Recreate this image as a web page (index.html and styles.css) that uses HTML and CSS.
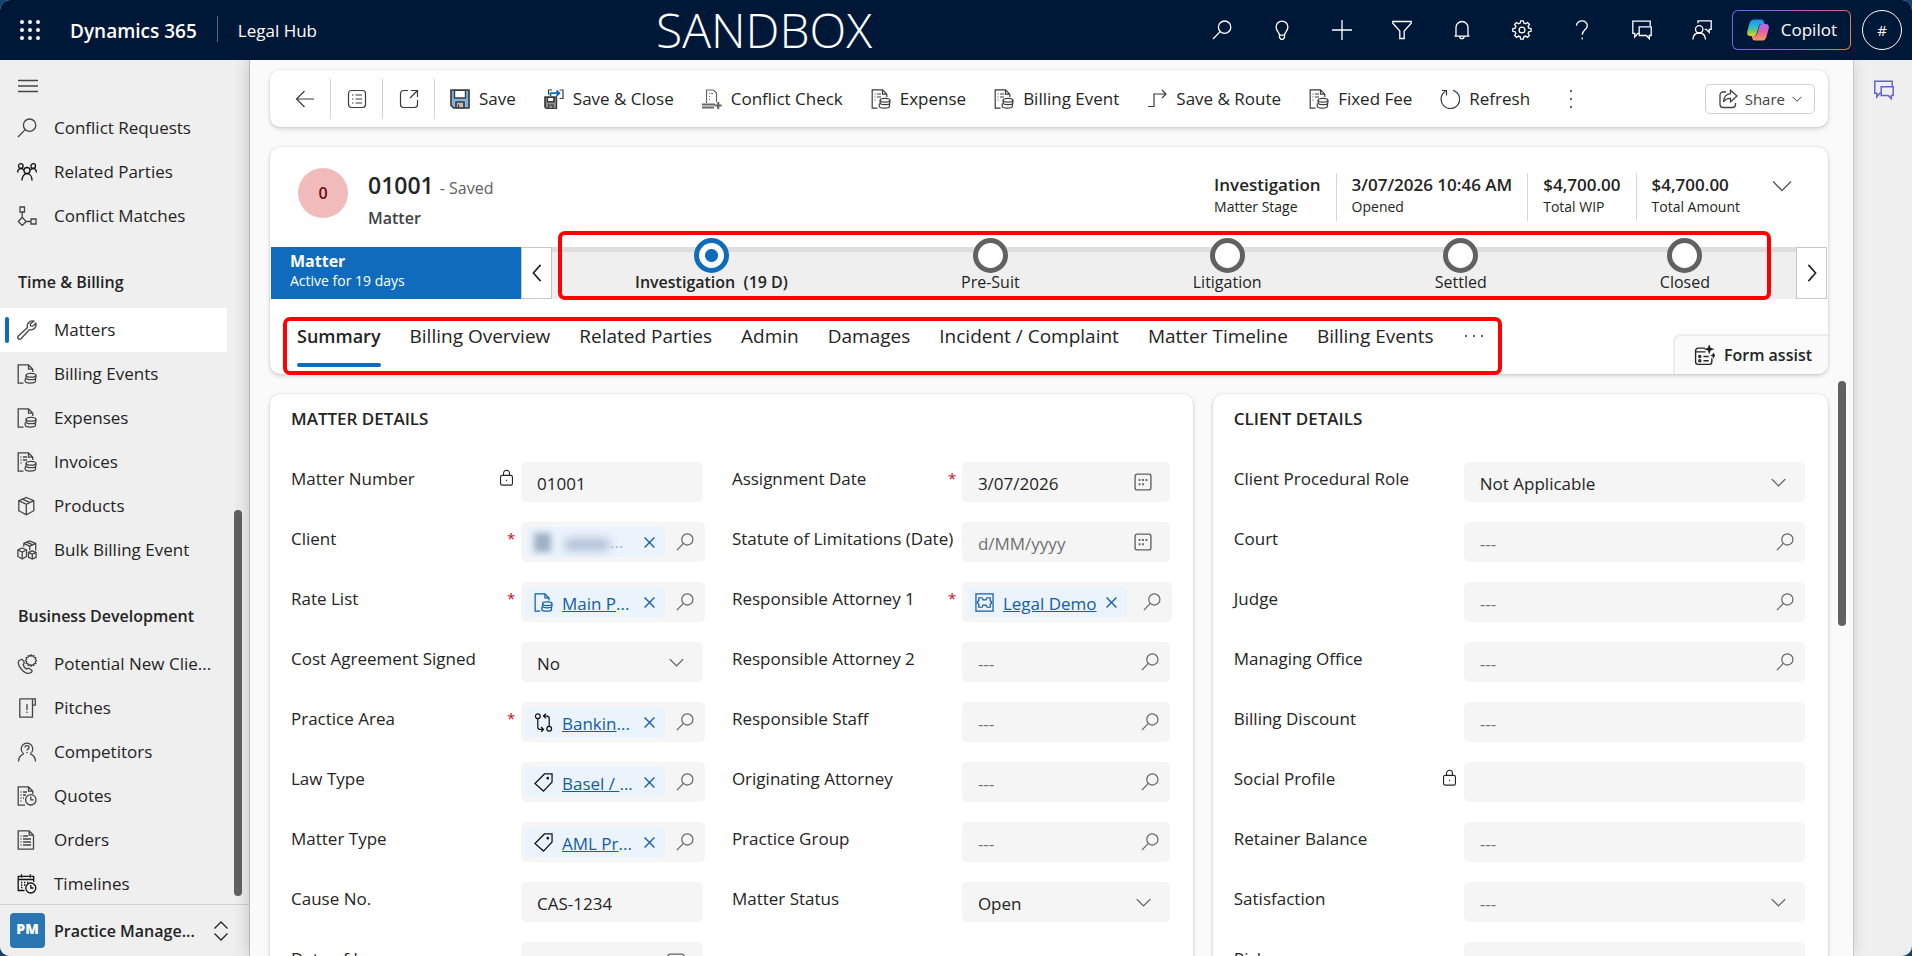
FILE: index.html
```html
<!DOCTYPE html>
<html lang="en">
<head>
<meta charset="utf-8">
<title>Matter: 01001 - Dynamics 365 Legal Hub</title>
<link rel="stylesheet" href="styles.css">
</head>
<body>
<svg class="sprite" aria-hidden="true">
  <defs>
    <linearGradient id="cp-a" x1="0" y1="0" x2="0" y2="1"><stop offset="0" stop-color="#1b8ff0"/><stop offset=".4" stop-color="#2bb5d8"/><stop offset=".7" stop-color="#6cc96a"/><stop offset="1" stop-color="#f2d21f"/></linearGradient>
    <linearGradient id="cp-b" x1="0" y1="1" x2="0" y2="0"><stop offset="0" stop-color="#a56cf5"/><stop offset=".45" stop-color="#e45fae"/><stop offset="1" stop-color="#ff9a4a"/></linearGradient>
  </defs>
  <symbol id="i-search" viewBox="0 0 20 20"><circle cx="12.6" cy="7.2" r="6.2"/><path d="M8.2 11.6 1 19"/></symbol>
  <symbol id="i-bulb" viewBox="0 0 20 20"><path d="M7.5 15.2c0-3-3.4-4-3.4-8.2a5.9 5.9 0 0 1 11.8 0c0 4.200-3.400 5.200-3.400 8.200zM7.500 15.200v2.300l1.500 1.800h2l1.500-1.800v-2.300"/></symbol>
  <symbol id="i-plus" viewBox="0 0 20 20"><path d="M10 0v20M0 10h20"/></symbol>
  <symbol id="i-filter" viewBox="0 0 20 20"><path d="M.8 1.500h18.400v1.700L12.200 11v7.500H7.800V11L.8 3.200z"/></symbol>
  <symbol id="i-bell" viewBox="0 0 20 20"><path d="M2.500 16.200h15M4 16V7.500a6 6 0 0 1 12 0V16M7.800 16.500a2.200 2.200 0 0 0 4.400 0"/></symbol>
  <symbol id="i-gear" viewBox="0 0 20 20"><circle cx="10" cy="10" r="2.900"/><path d="M8.700.8h2.600l.5 2.300 1.700.7 2-1.300 1.900 1.900-1.300 2 .7 1.700 2.300.6v2.600l-2.300.5-.7 1.700 1.300 2-1.900 1.900-2-1.300-1.700.7-.5 2.300H8.700l-.5-2.300-1.700-.7-2 1.300-1.900-1.900 1.300-2-.7-1.700-2.400-.5V8.700l2.400-.6.7-1.700-1.300-2 1.900-1.900 2 1.300 1.700-.7z"/></symbol>
  <symbol id="i-help" viewBox="0 0 20 20"><path d="M4.500 5.800C4.500 2.800 7 .9 10 .9s5.300 1.900 5.300 4.800c0 4-5.100 4.300-5.100 9"/><path d="M10.200 17.600v1.800"/></symbol>
  <symbol id="i-chat" viewBox="0 0 20 20"><path d="M7.200 13.300H5.800L2.800 17v-3.700H.8V1.200h17.400V6"/><path d="M7.200 6.800h12v8.700h-1.900v3.200l-3.100-3.200h-7z"/></symbol>
  <symbol id="i-feedback" viewBox="0 0 20 20"><circle cx="7.200" cy="9.300" r="3.700"/><path d="M.9 19.500c.2-4 2.700-6.500 6.300-6.500s6.100 2.500 6.300 6.500M6 3.300V.9h13.200v8.500h-2v3l-3-3h-1.500"/></symbol>
  <symbol id="i-menu" viewBox="0 0 20 20"><path d="M0 4.500h20M0 10h20M0 15.500h20"/></symbol>
  <symbol id="i-people" viewBox="0 0 20 20"><circle cx="3.800" cy="4" r="2.300"/><circle cx="16.200" cy="4" r="2.300"/><circle cx="10" cy="8.500" r="3"/><path d="M.6 10.500c0-2.500 1.200-4 3.200-4 1.400 0 2.400.7 2.900 1.600M19.400 10.500c0-2.500-1.200-4-3.200-4-1.400 0-2.400.7-2.900 1.600M5 18.500c0-4 2-6.800 5-6.800s5 2.800 5 6.800"/></symbol>
  <symbol id="i-nodes" viewBox="0 0 20 20"><path d="M3 1h4.500v5H3zM14 13h5v5h-5zM5.200 6v5.300M5.200 11.300 1.300 15.500l3.900 4 3.900-4zM9.100 15.500H14"/></symbol>
  <symbol id="i-wrench" viewBox="0 0 20 20"><path d="M16.800 1.200a5 5 0 0 0-6.300 6.400L1.300 16a1.900 1.900 0 0 0 2.700 2.700l8.500-9.200a5 5 0 0 0 6.300-6.300l-3 3-2.200-.2-.4-2.100z"/></symbol>
  <symbol id="i-coins" viewBox="0 0 20 20"><path d="M6.500 19.200H1.200V.8h10.300l4.300 4.400V8M11.500.8v4.400h4.300"/><ellipse cx="14" cy="11.300" rx="4.900" ry="1.900"/><path d="M9.100 11.300v2.500c0 1 2.200 1.900 4.900 1.900s4.900-.9 4.900-1.900v-2.500M8.200 14.500v2.600c0 1.200 2.200 2.100 5.100 2.100s5.200-.9 5.200-2.100v-2.600"/></symbol>
  <symbol id="i-invoice" viewBox="0 0 20 20"><use href="#i-coins"/><path d="M3.500 5h1M6 5h4M3.500 8h1M6 8h4M3.500 11h1"/></symbol>
  <symbol id="i-box" viewBox="0 0 20 20"><path d="m9.300 1.500 7.500 3.200v10l-7.500 4-7.500-4v-10zM1.800 4.700l7.500 3.600 7.500-3.600M9.300 8.300v10.400M5.500 3.100 13 6.700"/></symbol>
  <symbol id="i-boxes" viewBox="0 0 20 20"><path d="m5.200 8 4.300 2v6.500l-4.300 2.500L.9 16.500V10zM.9 10l4.300 2 4.300-2M5.200 12v7M12.500.8l6.200 2.600v7M6.800 6.800V3.400L12.500.8M6.800 3.400l5.900 2.800 6-2.800M12.700 6.200v4M9.700 2.100l6 2.800M15.300 10.800l3.800 1.700v4.900L15.300 19l-3.800-1.600v-4.900zM11.500 12.500l3.800 1.700 3.800-1.700M15.300 14.200V19"/></symbol>
  <symbol id="i-phone" viewBox="0 0 20 20"><path d="M3.800 5.500c-3 1-3.300 4-1 7.700 2.500 4 6.500 6.500 9.500 6 2.500-.5 3.300-2 2.300-3l-2.300-1.700c-1-.7-1.700 0-2.700.6-2-1-3-2.500-3.500-4.600.9-.8 1.300-1.400.9-2.500l-1.100-1.700c-.4-.9-1.200-1.100-2.100-.8z"/><path d="m14 .8 1 1.400 1.700-.6.3 1.700 1.800.3-.5 1.700 1.300 1.200-1.300 1.200.5 1.700-1.800.3-.3 1.700-1.700-.6-1 1.400-1-1.400-1.700.6-.3-1.700L9.200 9.400l.5-1.700-1.300-1.200 1.300-1.200-.5-1.700 1.800-.3.3-1.700 1.700.6z"/></symbol>
  <symbol id="i-pitch" viewBox="0 0 20 20"><path d="M2.800.8h15.500v6.400h-2.800V.8M15.500 7.200v12H2.800V.8M10 6v6M10 13.500v1.500"/></symbol>
  <symbol id="i-competitor" viewBox="0 0 20 20"><path d="M6.800 11.800a5.800 5.800 0 1 1 6.400 0M1.500 19.500c.2-4.200 2.200-6.700 5.300-7.700M18.500 19.500c-.2-4.200-2.200-6.700-5.300-7.700M8 5.500c0-2.400 4-2.400 4 0 0 1.700-2 1.500-2 3M10 10v1.200"/></symbol>
  <symbol id="i-quote" viewBox="0 0 20 20"><path d="M8 19.200H1.200V.8h10.300l4.300 4.400V8M11.500.8v4.400h4.300M3.500 6h1M6 6h4M3.500 9h1M6 9h3M3.500 12h1M6 12h1M3.500 15h1"/><circle cx="13.800" cy="13.800" r="5.200"/><path d="M13.800 10.500v3.300h3"/></symbol>
  <symbol id="i-order" viewBox="0 0 20 20"><path d="M1.200.8h11l4.300 4.400v14H1.200zM12.200.8v4.400h4.300M3.500 6h1M6 6h5M3.500 9h1M6 9h8M3.500 12h1M6 12h8M3.500 15h1M6 15h8"/></symbol>
  <symbol id="i-timeline" viewBox="0 0 20 20"><path d="M7.500 16.500H1.200V2.300h15.500V8M1.200 5.500h15.500M4.500.3v3.500M13.300.3v3.500M4 8.500h1.300M7 8.500h1.300M10 8.500h1.300M4 11h1.300M7 11h1.300M4 13.500h1.300"/><circle cx="13.800" cy="14" r="5"/><path d="M13.800 11v3h2.700"/></symbol>
  <symbol id="i-updown" viewBox="0 0 20 20"><path d="M3.500 7.500 10 1l6.500 6.500M3.500 12.500 10 19l6.500-6.500"/></symbol>
  <symbol id="i-back" viewBox="0 0 20 20"><path d="M19 10H1.500M9.500 2 1.500 10l8 8"/></symbol>
  <symbol id="i-form" viewBox="0 0 20 20"><rect x="1.500" y="1.500" width="17" height="17" rx="3"/><path d="M5 6h1.500M8.500 6H15M5 10h1.500M8.500 10H15M5 14h1.500M8.500 14H15"/></symbol>
  <symbol id="i-popout" viewBox="0 0 20 20"><path d="M9 1.500H4.500a3 3 0 0 0-3 3v11a3 3 0 0 0 3 3h11a3 3 0 0 0 3-3V11M12 1.500h6.500V8M18.500 1.500 11 9"/></symbol>
  <symbol id="i-save" viewBox="0 0 20 20"><path fill="#7fb3e0" d="M1 1h18v18H3.500L1 16.500z"/><path fill="#fff" d="M4.500 1.500h11V9h-11z"/><path fill="#c9b9ae" d="M6 13h8v6H6z"/><path d="M1 1h18v18H3.500L1 16.500zM4.500 1v8h11V1M6 19v-6h8v6M8.500 15.500V19"/></symbol>
  <symbol id="i-saveclose" viewBox="0 0 20 20"><path fill="#8f8f8f" d="M1 8h11.500v11.500H2.500L1 18z"/><path fill="#fff" d="M3.500 8.500h6.500v4H3.500z"/><path d="M1 8h11.500v11.500H2.500L1 18zM3.500 8v5H10V8M4.500 19.500V16h4.500v3.500M4.500 5.500V1H8M15.500 1H19v8.500h-3.500"/><path class="blue" d="M6.500 7V4.200h8.500M12.500 1.500l2.800 2.700-2.800 2.700"/></symbol>
  <symbol id="i-stamp" viewBox="0 0 20 20"><path d="M4.500 14V1h7l3 3v9M7 4.500h1M9 4.500h2M7 7.500h1M7 10.500h1"/><path stroke-width="2.200" d="M0 15.500h13M0 18.500h12M16.200 13v7M12.700 16.500h7"/></symbol>
  <symbol id="i-route" viewBox="0 0 20 20"><path d="M1 17.500h6V5h12M15 1l4 4-4 4"/></symbol>
  <symbol id="i-refresh" viewBox="0 0 20 20"><path d="M5.500 2.300A9.300 9.300 0 1 0 13 1.300M2 1.500h4.500V6.500"/></symbol>
  <symbol id="i-share" viewBox="0 0 20 20"><path d="M8 3H5a3 3 0 0 0-3 3v9.500a3 3 0 0 0 3 3h9.500a3 3 0 0 0 3-3V14"/><path d="M12.500 1.300 19 7l-6.500 5.700V9.300c-3.500-.2-5.500 1-7 3.700.3-4.500 2.500-8 7-8.300z"/></symbol>
  <symbol id="i-down" viewBox="0 0 20 20"><path d="m1 5.500 9 9 9-9"/></symbol>
  <symbol id="i-left" viewBox="0 0 20 20"><path d="m14 1-8 9 8 9"/></symbol>
  <symbol id="i-right" viewBox="0 0 20 20"><path d="m6 1 8 9-8 9"/></symbol>
  <symbol id="i-lock" viewBox="0 0 20 20"><rect x="3" y="7.500" width="14" height="11.500" rx="2"/><path d="M6.500 7.500V5a3.500 3.500 0 0 1 7 0v2.500M10 12.500v1.500"/></symbol>
  <symbol id="i-cal" viewBox="0 0 20 20"><rect x="1.200" y="1.200" width="17.600" height="17.600" rx="2.500"/><path stroke-width="2.200" d="M5.200 7.800h2M9 7.800h2M12.800 7.800h2M5.200 12.500h2M9 12.500h2"/></symbol>
  <symbol id="i-x" viewBox="0 0 20 20"><path d="m1 1 18 18M19 1 1 19"/></symbol>
  <symbol id="i-swap" viewBox="0 0 20 20"><circle cx="4" cy="3.500" r="2.500"/><circle cx="16" cy="16.500" r="2.500"/><path d="M4 6v9c0 1.500.8 2.300 2.500 2.300H9.500M7.500 14.800l2.500 2.500-2.500 2.500M16 14V5.500c0-1.500-.8-2.300-2.500-2.300h-3M12.500.8 10 3.200l2.500 2.500"/></symbol>
  <symbol id="i-tag" viewBox="0 0 20 20"><path d="M11 1h8v8.500L10 19 1 11z"/><circle cx="14.500" cy="5.500" r=".8"/></symbol>
  <symbol id="i-puzzle" viewBox="0 0 20 20"><path d="M1 1h18v18H1z"/><path d="M4 5h3.300l1.200 2.200h3L12.700 5H16v3.200l1.300.8v2l-1.300.8V15h-3.300l-1.200-2.200h-3L7.300 15H4v-3.200L2.700 11V9L4 8.200z"/></symbol>
  <symbol id="i-assist" viewBox="0 0 20 20"><path d="M10.500 3H4a2.500 2.500 0 0 0-2.500 2.500V16A2.500 2.500 0 0 0 4 18.500h10.500A2.500 2.500 0 0 0 17 16v-3.500M1.500 6.500H11M9 11h5M9 15h5"/><circle cx="5.500" cy="11" r="1"/><circle cx="5.500" cy="15" r="1"/><path fill="currentColor" stroke="none" d="m14.500-1 1.300 3.700L19.500 4l-3.700 1.300L14.500 9l-1.300-3.700L9.500 4l3.700-1.300zM18.500 7l.9 2.100 2.100.9-2.100.9-.9 2.100-.9-2.100-2.100-.9 2.100-.9z"/></symbol>
  <symbol id="i-copilot" viewBox="0 0 24 24"><path fill="url(#cp-b)" transform="rotate(180 12 12)" d="M8.500 1.500h6.500c1.500 0 2.300.8 2.700 2.200L18.500 6h-3c-1.500 0-2.300.8-2.700 2.200l-2.200 7.600c-.4 1.400-1.200 2.200-2.700 2.200H4.200c-2.400 0-3.600-1.800-3-4.300l2.400-8.600C4.300 2.700 5.800 1.500 8.500 1.500z"/><path fill="url(#cp-a)" d="M8.500 1.500h6.500c1.500 0 2.300.8 2.700 2.200L18.500 6h-3c-1.500 0-2.300.8-2.700 2.200l-2.200 7.600c-.4 1.400-1.200 2.200-2.700 2.200H4.200c-2.400 0-3.600-1.800-3-4.300l2.400-8.600C4.300 2.700 5.800 1.500 8.500 1.500z"/></symbol>
</svg>

<div class="app">
  <header class="topbar">
    <button class="icon-btn waffle" aria-label="App launcher"><i></i><i></i><i></i><i></i><i></i><i></i><i></i><i></i><i></i></button>
    <a class="brand" href="#">Dynamics 365</a>
    <a class="app-name" href="#">Legal Hub</a>
    <span class="env">SANDBOX</span>
    <div class="top-actions">
      <button class="icon-btn" aria-label="Search"><svg class="ic"><use href="#i-search"/></svg></button>
      <button class="icon-btn" aria-label="Ideas"><svg class="ic"><use href="#i-bulb"/></svg></button>
      <button class="icon-btn" aria-label="New"><svg class="ic"><use href="#i-plus"/></svg></button>
      <button class="icon-btn" aria-label="Filter"><svg class="ic"><use href="#i-filter"/></svg></button>
      <button class="icon-btn" aria-label="Notifications"><svg class="ic"><use href="#i-bell"/></svg></button>
      <button class="icon-btn" aria-label="Settings"><svg class="ic"><use href="#i-gear"/></svg></button>
      <button class="icon-btn" aria-label="Help"><svg class="ic"><use href="#i-help"/></svg></button>
      <button class="icon-btn" aria-label="Chat"><svg class="ic"><use href="#i-chat"/></svg></button>
      <button class="icon-btn" aria-label="Feedback"><svg class="ic"><use href="#i-feedback"/></svg></button>
    </div>
    <button class="copilot"><svg class="ic logo"><use href="#i-copilot"/></svg>Copilot</button>
    <button class="me" aria-label="Account">#</button>
  </header>

  <div class="body">
    <nav class="side" aria-label="Site map">
      <div class="side-scroll">
        <button class="menu" aria-label="Collapse menu"><svg class="ic"><use href="#i-menu"/></svg></button>
        <ul>
          <li><a href="#"><svg class="ic"><use href="#i-search"/></svg><span>Conflict Requests</span></a></li>
          <li><a href="#"><svg class="ic dark"><use href="#i-people"/></svg><span>Related Parties</span></a></li>
          <li><a href="#"><svg class="ic"><use href="#i-nodes"/></svg><span>Conflict Matches</span></a></li>
        </ul>
        <h2>Time &amp; Billing</h2>
        <ul>
          <li><a href="#" class="current" aria-current="page"><svg class="ic"><use href="#i-wrench"/></svg><span>Matters</span></a></li>
          <li><a href="#"><svg class="ic"><use href="#i-coins"/></svg><span>Billing Events</span></a></li>
          <li><a href="#"><svg class="ic"><use href="#i-coins"/></svg><span>Expenses</span></a></li>
          <li><a href="#"><svg class="ic"><use href="#i-invoice"/></svg><span>Invoices</span></a></li>
          <li><a href="#"><svg class="ic"><use href="#i-box"/></svg><span>Products</span></a></li>
          <li><a href="#"><svg class="ic"><use href="#i-boxes"/></svg><span>Bulk Billing Event</span></a></li>
        </ul>
        <h2>Business Development</h2>
        <ul>
          <li><a href="#"><svg class="ic"><use href="#i-phone"/></svg><span>Potential New Clie...</span></a></li>
          <li><a href="#"><svg class="ic"><use href="#i-pitch"/></svg><span>Pitches</span></a></li>
          <li><a href="#"><svg class="ic"><use href="#i-competitor"/></svg><span>Competitors</span></a></li>
          <li><a href="#"><svg class="ic"><use href="#i-quote"/></svg><span>Quotes</span></a></li>
          <li><a href="#"><svg class="ic"><use href="#i-order"/></svg><span>Orders</span></a></li>
          <li><a href="#"><svg class="ic dark"><use href="#i-timeline"/></svg><span>Timelines</span></a></li>
        </ul>
        <span class="thumb side-thumb"></span>
      </div>
      <button class="area"><b class="pm">PM</b><span>Practice Manage...</span><svg class="ic"><use href="#i-updown"/></svg></button>
    </nav>

    <main class="main">
      <div class="commands" role="toolbar" aria-label="Commands">
        <button class="cmd nav-cmd" aria-label="Back"><svg class="ic"><use href="#i-back"/></svg></button>
        <button class="cmd nav-cmd" aria-label="Show form list"><svg class="ic"><use href="#i-form"/></svg></button>
        <button class="cmd nav-cmd" aria-label="Open in new window"><svg class="ic"><use href="#i-popout"/></svg></button>
        <button class="cmd"><svg class="ic"><use href="#i-save"/></svg>Save</button>
        <button class="cmd"><svg class="ic"><use href="#i-saveclose"/></svg>Save &amp; Close</button>
        <button class="cmd"><svg class="ic grey"><use href="#i-stamp"/></svg>Conflict Check</button>
        <button class="cmd"><svg class="ic"><use href="#i-invoice"/></svg>Expense</button>
        <button class="cmd"><svg class="ic"><use href="#i-invoice"/></svg>Billing Event</button>
        <button class="cmd"><svg class="ic"><use href="#i-route"/></svg>Save &amp; Route</button>
        <button class="cmd"><svg class="ic"><use href="#i-invoice"/></svg>Fixed Fee</button>
        <button class="cmd"><svg class="ic"><use href="#i-refresh"/></svg>Refresh</button>
        <button class="cmd more" aria-label="More commands"><i></i><i></i><i></i></button>
        <button class="share"><svg class="ic"><use href="#i-share"/></svg>Share<svg class="ic tiny"><use href="#i-down"/></svg></button>
      </div>

      <section class="card record">
        <div class="record-head">
          <span class="avatar">0</span>
          <div class="record-title">
            <h1>01001 <small>- Saved</small></h1>
            <p>Matter</p>
          </div>
          <dl class="facts">
            <div><dd>Investigation</dd><dt>Matter Stage</dt></div>
            <div><dd>3/07/2026 10:46 AM</dd><dt>Opened</dt></div>
            <div><dd>$4,700.00</dd><dt>Total WIP</dt></div>
            <div><dd>$4,700.00</dd><dt>Total Amount</dt></div>
          </dl>
          <button class="expand" aria-label="Show more header fields"><svg class="ic"><use href="#i-down"/></svg></button>
        </div>

        <div class="process">
          <button class="process-name"><b>Matter</b><span>Active for 19 days</span></button>
          <button class="step" aria-label="Previous stage"><svg class="ic"><use href="#i-left"/></svg></button>
          <ol class="stages">
            <li class="active"><button><i></i><span>Investigation&nbsp; (19 D)</span></button></li>
            <li><button><i></i><span>Pre-Suit</span></button></li>
            <li><button><i></i><span>Litigation</span></button></li>
            <li><button><i></i><span>Settled</span></button></li>
            <li><button><i></i><span>Closed</span></button></li>
          </ol>
          <button class="step" aria-label="Next stage"><svg class="ic"><use href="#i-right"/></svg></button>
        </div>

        <div class="tab-row">
          <div class="tabs" role="tablist">
            <button role="tab" aria-selected="true">Summary</button>
            <button role="tab">Billing Overview</button>
            <button role="tab">Related Parties</button>
            <button role="tab">Admin</button>
            <button role="tab">Damages</button>
            <button role="tab">Incident / Complaint</button>
            <button role="tab">Matter Timeline</button>
            <button role="tab">Billing Events</button>
            <button class="dots" aria-label="More tabs"><i></i><i></i><i></i></button>
          </div>
          <button class="assist"><svg class="ic"><use href="#i-assist"/></svg>Form assist</button>
        </div>
      </section>

      <div class="sections">
        <section class="card form-card">
          <h2>MATTER DETAILS</h2>
          <div class="cols">
            <div class="fields">
              <div class="row"><label for="f1">Matter Number</label><svg class="ic lock"><use href="#i-lock"/></svg><div class="field"><input id="f1" value="01001" readonly></div></div>
              <div class="row"><label for="f2">Client</label><em>*</em><div class="field lookup"><div class="chip"><span class="hidden-icon"></span><span class="hidden-name"></span><span class="fade">...</span><button aria-label="Remove client"><svg class="ic"><use href="#i-x"/></svg></button></div><button id="f2" class="find" aria-label="Search clients"><svg class="ic"><use href="#i-search"/></svg></button></div></div>
              <div class="row"><label for="f3">Rate List</label><em>*</em><div class="field lookup"><div class="chip"><svg class="ic"><use href="#i-coins"/></svg><a href="#"><u>Main P</u>...</a><button aria-label="Remove rate list"><svg class="ic"><use href="#i-x"/></svg></button></div><button id="f3" class="find" aria-label="Search rate lists"><svg class="ic"><use href="#i-search"/></svg></button></div></div>
              <div class="row"><label for="f4">Cost Agreement Signed</label><div class="field"><select id="f4"><option>No</option></select><svg class="ic chev"><use href="#i-down"/></svg></div></div>
              <div class="row"><label for="f5">Practice Area</label><em>*</em><div class="field lookup"><div class="chip"><svg class="ic dark"><use href="#i-swap"/></svg><a href="#"><u>Bankin</u>...</a><button aria-label="Remove practice area"><svg class="ic"><use href="#i-x"/></svg></button></div><button id="f5" class="find" aria-label="Search practice areas"><svg class="ic"><use href="#i-search"/></svg></button></div></div>
              <div class="row"><label for="f6">Law Type</label><div class="field lookup"><div class="chip"><svg class="ic dark"><use href="#i-tag"/></svg><a href="#"><u>Basel / </u>...</a><button aria-label="Remove law type"><svg class="ic"><use href="#i-x"/></svg></button></div><button id="f6" class="find" aria-label="Search law types"><svg class="ic"><use href="#i-search"/></svg></button></div></div>
              <div class="row"><label for="f7">Matter Type</label><div class="field lookup"><div class="chip"><svg class="ic dark"><use href="#i-tag"/></svg><a href="#"><u>AML Pr</u>...</a><button aria-label="Remove matter type"><svg class="ic"><use href="#i-x"/></svg></button></div><button id="f7" class="find" aria-label="Search matter types"><svg class="ic"><use href="#i-search"/></svg></button></div></div>
              <div class="row"><label for="f8">Cause No.</label><div class="field"><input id="f8" value="CAS-1234"></div></div>
              <div class="row"><label for="f9">Date of Loss</label><div class="field"><input id="f9"><svg class="ic cal"><use href="#i-cal"/></svg></div></div>
            </div>
            <div class="fields">
              <div class="row"><label for="g1">Assignment Date</label><em>*</em><div class="field"><input id="g1" value="3/07/2026"><svg class="ic cal"><use href="#i-cal"/></svg></div></div>
              <div class="row"><label for="g2">Statute of Limitations (Date)</label><div class="field"><input id="g2" placeholder="d/MM/yyyy"><svg class="ic cal"><use href="#i-cal"/></svg></div></div>
              <div class="row"><label for="g3">Responsible Attorney 1</label><em>*</em><div class="field lookup"><div class="chip wide"><svg class="ic"><use href="#i-puzzle"/></svg><a href="#"><u>Legal Demo</u></a><button aria-label="Remove attorney"><svg class="ic"><use href="#i-x"/></svg></button></div><button id="g3" class="find" aria-label="Search attorneys"><svg class="ic"><use href="#i-search"/></svg></button></div></div>
              <div class="row"><label for="g4">Responsible Attorney 2</label><div class="field"><input id="g4" placeholder="---"><button class="find" aria-label="Search attorneys"><svg class="ic"><use href="#i-search"/></svg></button></div></div>
              <div class="row"><label for="g5">Responsible Staff</label><div class="field"><input id="g5" placeholder="---"><button class="find" aria-label="Search staff"><svg class="ic"><use href="#i-search"/></svg></button></div></div>
              <div class="row"><label for="g6">Originating Attorney</label><div class="field"><input id="g6" placeholder="---"><button class="find" aria-label="Search originating attorneys"><svg class="ic"><use href="#i-search"/></svg></button></div></div>
              <div class="row"><label for="g7">Practice Group</label><div class="field"><input id="g7" placeholder="---"><button class="find" aria-label="Search practice groups"><svg class="ic"><use href="#i-search"/></svg></button></div></div>
              <div class="row"><label for="g8">Matter Status</label><div class="field"><select id="g8"><option>Open</option></select><svg class="ic chev"><use href="#i-down"/></svg></div></div>
            </div>
          </div>
        </section>

        <section class="card form-card client">
          <h2>CLIENT DETAILS</h2>
          <div class="fields">
            <div class="row"><label for="h1">Client Procedural Role</label><div class="field"><select id="h1"><option>Not Applicable</option></select><svg class="ic chev"><use href="#i-down"/></svg></div></div>
            <div class="row"><label for="h2">Court</label><div class="field"><input id="h2" placeholder="---"><button class="find" aria-label="Search courts"><svg class="ic"><use href="#i-search"/></svg></button></div></div>
            <div class="row"><label for="h3">Judge</label><div class="field"><input id="h3" placeholder="---"><button class="find" aria-label="Search judges"><svg class="ic"><use href="#i-search"/></svg></button></div></div>
            <div class="row"><label for="h4">Managing Office</label><div class="field"><input id="h4" placeholder="---"><button class="find" aria-label="Search offices"><svg class="ic"><use href="#i-search"/></svg></button></div></div>
            <div class="row"><label for="h5">Billing Discount</label><div class="field"><input id="h5" placeholder="---"></div></div>
            <div class="row"><label for="h6">Social Profile</label><svg class="ic lock"><use href="#i-lock"/></svg><div class="field"><input id="h6" readonly></div></div>
            <div class="row"><label for="h7">Retainer Balance</label><div class="field"><input id="h7" placeholder="---"></div></div>
            <div class="row"><label for="h8">Satisfaction</label><div class="field"><select id="h8" class="empty"><option>---</option></select><svg class="ic chev"><use href="#i-down"/></svg></div></div>
            <div class="row"><label for="h9">Risk</label><div class="field"><input id="h9"></div></div>
          </div>
        </section>
        <span class="thumb form-thumb"></span>
      </div>
    </main>

    <aside class="rail"><button aria-label="Open chat"><svg class="ic"><use href="#i-chat"/></svg></button></aside>
  </div>
</div>
</body>
</html>
```

FILE: styles.css
```css
* { box-sizing: border-box; }
body {
  margin: 0;
  background: #0d4472;
  color: #242424;
  font: 17px/24px "Open Sans", "Noto Sans", sans-serif;
}
h1, h2, p, ul, ol, dl, dd { margin: 0; padding: 0; }
ul, ol { list-style: none; }
a { color: inherit; text-decoration: none; }
button, input, select {
  margin: 0;
  padding: 0;
  border: 0;
  background: none;
  color: inherit;
  font: inherit;
}
.sprite { position: absolute; width: 0; height: 0; }
.ic {
  flex: none;
  width: 20px;
  height: 20px;
  overflow: visible;
  fill: none;
  stroke: currentColor;
  stroke-width: 1.3;
}
.blue { stroke: #0f6cbd; stroke-width: 1.8; }
.dark { color: #111; }

.app {
  display: flex;
  flex-direction: column;
  height: 100vh;
  overflow: hidden;
  border-radius: 10px;
  background: #efefef;
}

/* Top bar */
.topbar {
  position: relative;
  display: flex;
  flex: none;
  align-items: center;
  height: 60px;
  padding: 0 10px 0 20px;
  background: #001838;
  color: #fff;
}
.icon-btn { display: flex; align-items: center; justify-content: center; }
.waffle {
  display: grid;
  grid-template-columns: repeat(3, 4px);
  gap: 4px;
  width: 20px;
  margin-right: 30px;
}
.waffle i { width: 4px; height: 4px; border-radius: 50%; background: #fff; }
.brand {
  padding-right: 20px;
  padding-top: 2px;
  font-size: 19px;
  font-weight: 600;
}
.app-name { position: relative; padding: 2px 0 0 21px; font-size: 17px; }
.app-name::before {
  content: "";
  position: absolute;
  left: 0;
  top: -1px;
  width: 1px;
  height: 26px;
  background: #5b6b85;
}
.env {
  position: absolute;
  left: 0;
  right: 0;
  margin: 0 auto;
  width: max-content;
  padding-right: 384px;
  font-size: 48px;
  font-weight: 300;
  line-height: 60px;
  pointer-events: none;
}
.top-actions { display: flex; gap: 40px; margin-left: auto; margin-right: 20px; }
.copilot {
  display: flex;
  align-items: center;
  gap: 11px;
  height: 40px;
  padding: 0 13px;
  border: 1px solid transparent;
  border-radius: 6px;
  background:
    linear-gradient(#001838, #001838) padding-box,
    linear-gradient(110deg, #5b6cf0, #a45ce0 40%, #e0559a 75%, #e88a2a) border-box;
}
.logo { width: 24px; height: 24px; stroke: none; }
.me {
  width: 40px;
  height: 40px;
  margin-left: 11px;
  border: 1px solid #fff;
  border-radius: 50%;
  font-size: 15px;
}

.body { display: flex; flex: 1; min-height: 0; }

/* Site map */
.side { display: flex; flex: none; flex-direction: column; width: 249px; background: #efefef; }
.side-scroll { position: relative; flex: 1; min-height: 0; overflow: hidden; }
.menu { display: flex; align-items: center; height: 46px; padding: 6px 18px 0; color: #444; }
.side li a {
  position: relative;
  display: flex;
  align-items: center;
  gap: 17px;
  height: 44px;
  margin-right: 22px;
  padding: 0 0 0 17px;
}
.side li span, .area span { white-space: nowrap; }
.side li .ic { color: #444; }
.side li .dark { color: #111; }
.side li .current { background: #fff; }
.current::before {
  content: "";
  position: absolute;
  left: 5px;
  top: 9px;
  width: 4px;
  height: 26px;
  border-radius: 2px;
  background: #0f6cbd;
}
.side h2 { padding: 32px 18px 14px; font-size: 16px; font-weight: 600; line-height: 24px; }
.thumb { position: absolute; width: 8px; border-radius: 4px; background: #616161; }
.side-thumb { right: 7px; bottom: 8px; height: 386px; }
.area {
  display: flex;
  flex: none;
  align-items: center;
  gap: 9px;
  height: 52px;
  padding: 0 18px 0 10px;
  border-top: 1px solid #d1d1d1;
  font-size: 16px;
  font-weight: 600;
  text-align: left;
}
.area .ic { margin-left: auto; }
.pm {
  width: 35px;
  height: 35px;
  border-radius: 4px;
  background: #2a76b3;
  color: #fff;
  font-size: 14px;
  line-height: 32px;
  text-align: center;
}

/* Main column */
.main {
  position: relative;
  display: flex;
  flex: 1;
  flex-direction: column;
  gap: 20px;
  min-width: 0;
  padding: 10px 25px 0 20px;
  border-left: 1px solid #b8b8b8;
  border-right: 1px solid #c8c8c8;
  background: #fafafa;
  box-shadow: -2px 0 14px rgba(0, 0, 0, .16);
}
.commands, .card {
  border-radius: 10px;
  background: #fff;
  box-shadow: 0 0 2px rgba(0, 0, 0, .14), 0 2px 4px rgba(0, 0, 0, .16);
}
.commands { display: flex; flex: none; align-items: center; height: 57px; padding: 0 13px 0 10px; }
.cmd { display: flex; align-items: center; gap: 9px; height: 40px; padding: 0 14px; white-space: nowrap; }
.cmd .ic { color: #3b3b3b; stroke-width: 1.2; }
.cmd .grey { color: #666; }
.nav-cmd { padding: 0 15px 0 16px; border-right: 1px solid #d1d1d1; }
.nav-cmd:first-child { padding-left: 15px; }
.nav-cmd + .cmd:not(.nav-cmd) { padding-left: 15px; }
.more { flex-direction: column; justify-content: center; gap: 6px; padding: 0 26px; }
.more i, .dots i { width: 2px; height: 2px; background: #333; border-radius: 1px; }
.share {
  display: flex;
  align-items: center;
  gap: 7px;
  height: 30px;
  margin-left: auto;
  padding: 0 12px;
  border: 1px solid #d1d1d1;
  border-radius: 5px;
  color: #424242;
  font-size: 15px;
}
.tiny { width: 10px; height: 10px; stroke-width: 2; }

/* Record header */
.record { flex: none; }
.record-head { display: flex; height: 100px; padding: 21px 36px 0 28px; }
.avatar {
  flex: none;
  width: 50px;
  height: 50px;
  border-radius: 50%;
  background: #f1bbbc;
  color: #6e0811;
  font-size: 16px;
  font-weight: 600;
  line-height: 50px;
  text-align: center;
}
.record-title { margin-left: 20px; }
h1 { font-size: 23px; font-weight: 600; line-height: 34px; }
h1 small { color: #616161; font-size: 16px; font-weight: 400; }
.record-title p { color: #424242; font-size: 16px; font-weight: 600; line-height: 26px; }
.facts { display: flex; height: 48px; margin-left: auto; margin-top: 5px; }
.facts div { padding: 0 15px; border-left: 1px solid #d6d6d6; }
.facts div:first-child { border: 0; }
.facts dd { font-weight: 600; line-height: 24px; }
.facts dt { font-size: 14px; line-height: 20px; }
.expand { align-self: flex-start; margin: 8px 0 0 17px; color: #555; }

/* Business process */
.process { display: flex; height: 52px; margin: 0 1px; }
.process-name {
  display: flex;
  flex: none;
  flex-direction: column;
  align-items: flex-start;
  width: 250px;
  padding: 2px 19px;
  background: #0f6cbd;
  color: #fff;
  font-size: 16px;
  line-height: 24px;
}
.process-name span { font-size: 14px; line-height: 16px; }
.step {
  display: flex;
  flex: none;
  align-items: center;
  justify-content: center;
  width: 31px;
  border: 1px solid #c8c8c8;
  background: #fff;
  color: #222;
}
.step .ic { width: 18px; height: 18px; stroke-width: 1.8; }
.stages {
  position: relative;
  display: flex;
  flex: 1;
  justify-content: space-between;
  padding: 0 86px 0 83px;
  border-top: 5px solid #dedede;
  background: #efefef;
  font-size: 16px;
}
.stages button { display: flex; flex-direction: column; align-items: center; margin-top: -14px; line-height: 18px; }
.stages i {
  width: 35px;
  height: 35px;
  border: 5px solid #616161;
  border-radius: 50%;
  background: #fff;
}
.stages .active { font-weight: 600; }
.stages .active i { border-color: #0f6cbd; background: radial-gradient(circle, #0f6cbd 6px, #fff 7px); }
.stages::after, .tabs::after {
  content: "";
  position: absolute;
  border: 4px solid #f00;
  border-radius: 7px;
  pointer-events: none;
}
.stages::after { inset: -21px 25px -1px 6px; }

/* Tabs */
.tab-row { display: flex; height: 75px; padding-left: 13px; }
.tabs { position: relative; display: flex; gap: 29px; padding: 0 19px 0 14px; }
.tabs::after { inset: 18px 0 -1px 0; }
.tabs button { position: relative; height: 75px; padding-bottom: 2px; font-size: 19px; white-space: nowrap; }
.tabs [aria-selected] { font-size: 18px; font-weight: 600; }
.tabs [aria-selected]::after {
  content: "";
  position: absolute;
  left: 0;
  right: 0;
  bottom: 7px;
  height: 4px;
  border-radius: 2px;
  background: #0f6cbd;
}
.tabs .dots { display: flex; align-items: center; gap: 6px; padding-left: 3px; }
.assist {
  display: flex;
  align-self: flex-end;
  align-items: center;
  gap: 9px;
  height: 40px;
  margin-left: auto;
  padding: 0 16px 0 19px;
  border: 2px solid #ececec;
  border-width: 2px 0 0 2px;
  border-radius: 8px 0 10px 0;
  background: #fafafa;
  font-size: 16px;
  font-weight: 600;
}
.assist .ic { width: 21px; height: 21px; }

/* Form */
.sections { position: relative; display: grid; flex: 1; grid-template-columns: 3fr 2fr; gap: 20px; min-height: 0; }
.form-thumb { right: -18px; top: -13px; height: 245px; }
.form-card { padding: 13px 23px 0 21px; }
.form-card h2 { margin-bottom: 31px; font-size: 17px; font-weight: 600; line-height: 24px; }
.cols { display: grid; grid-template-columns: 412fr 438fr; gap: 29px; }
.fields { display: flex; flex-direction: column; gap: 20px; min-width: 0; }
.row { display: flex; height: 40px; }
.row label { flex: none; width: 209px; padding-top: 5px; white-space: nowrap; }
.row em { width: 21px; padding: 4px 0 0 7px; color: #c50f1f; font-style: normal; font-size: 15px; }
.row label + .field { margin-left: 21px; }
.lock { width: 17px; height: 17px; margin: 7px 6px 0 -2px; }
.field {
  display: flex;
  flex: 1;
  align-items: center;
  min-width: 0;
  border-radius: 5px;
  background: #f5f5f5;
}
.field input, .field select {
  flex: 1;
  align-self: stretch;
  min-width: 0;
  padding: 4px 0 0 16px;
  appearance: none;
}
.field input::placeholder, .field .empty { color: #707070; opacity: 1; }
.field > .ic { color: #616161; pointer-events: none; }
.field > .chev { width: 15px; height: 15px; margin-right: 19px; stroke-width: 1.8; }
.field > .cal { width: 18px; height: 18px; margin-right: 18px; stroke-width: 1.5; }
.find { display: flex; margin: 0 11px 0 auto; color: #616161; }
.find .ic { width: 18px; height: 18px; }
.lookup { margin-right: -2px; padding-left: 5px; }
.chip {
  display: flex;
  align-items: center;
  width: 139px;
  height: 30px;
  padding: 0 10px 0 8px;
  border-radius: 5px;
  background: #ebf3fc;
  color: #115ea3;
}
.chip.wide { width: 160px; }
.chip > .ic { width: 19px; height: 19px; }
.chip a { margin: 3px auto 0 9px; white-space: nowrap; }
.chip button { display: flex; }
.chip button .ic { width: 11px; height: 11px; stroke-width: 2.4; }
.hidden-icon { width: 17px; height: 19px; background: #9db0c4; filter: blur(3px); }
.hidden-name { width: 46px; height: 13px; margin: 4px 0 0 13px; border-radius: 6px; background: #b3c4d8; filter: blur(4px); }
.fade { margin-right: auto; color: #9fb6cf; }

/* Right rail */
.rail { flex: none; width: 58px; padding: 20px 0 0 20px; color: #6264c7; }
.rail .ic { stroke-width: 1.5; }
```
